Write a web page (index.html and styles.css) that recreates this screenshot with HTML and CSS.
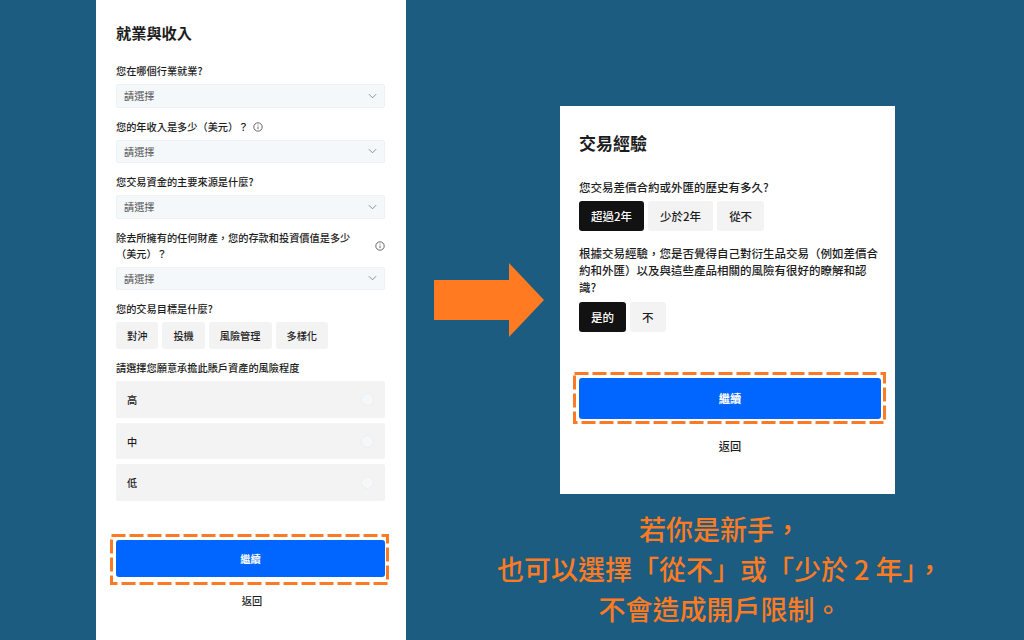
FILE: index.html
```html
<!DOCTYPE html>
<html lang="zh-Hant">
<head>
<meta charset="utf-8">
<title>開戶問卷</title>
<link rel="stylesheet" href="styles.css">
</head>
<body>
<main class="page">
  <section class="panel">
    <h2 class="panel-title">就業與收入</h2>
    <div class="field">
      <div class="label">您在哪個行業就業?</div>
      <div class="select"><span>請選擇</span><svg class="chev" viewBox="0 0 10 6"><path d="M1 1l4 4 4-4"/></svg></div>
    </div>
    <div class="field">
      <div class="label label-inline">您的年收入是多少（美元）？<svg class="info" viewBox="0 0 10 10"><circle cx="5" cy="5" r="4.2"/><path d="M5 4.5v2.7M5 2.6v.9"/></svg></div>
      <div class="select"><span>請選擇</span><svg class="chev" viewBox="0 0 10 6"><path d="M1 1l4 4 4-4"/></svg></div>
    </div>
    <div class="field">
      <div class="label">您交易資金的主要來源是什麼?</div>
      <div class="select"><span>請選擇</span><svg class="chev" viewBox="0 0 10 6"><path d="M1 1l4 4 4-4"/></svg></div>
    </div>
    <div class="field">
      <div class="label label-split"><span class="label-wrap">除去所擁有的任何財產，您的存款和投資價值是多少（美元）？</span><svg class="info" viewBox="0 0 10 10"><circle cx="5" cy="5" r="4.2"/><path d="M5 4.5v2.7M5 2.6v.9"/></svg></div>
      <div class="select"><span>請選擇</span><svg class="chev" viewBox="0 0 10 6"><path d="M1 1l4 4 4-4"/></svg></div>
    </div>
    <div class="field">
      <div class="label">您的交易目標是什麼?</div>
      <div class="chips">
        <span class="chip">對沖</span><span class="chip">投機</span><span class="chip">風險管理</span><span class="chip">多樣化</span>
      </div>
    </div>
    <div class="field">
      <div class="label">請選擇您願意承擔此賬戶資產的風險程度</div>
      <div class="rows">
        <div class="row"><span>高</span><i class="radio"></i></div>
        <div class="row"><span>中</span><i class="radio"></i></div>
        <div class="row"><span>低</span><i class="radio"></i></div>
      </div>
    </div>
    <div class="dash dash-left">
      <svg class="dash-line" viewBox="0 0 279 51"><rect x="1.5" y="1.5" width="276" height="48"/></svg>
      <div class="cta">繼續</div>
    </div>
    <div class="back">返回</div>
  </section>

  <section class="stage">
    <div class="stage-top">
      <svg class="arrow" viewBox="0 0 110 74"><polygon points="0,17 75,17 75,0 110,37 75,74 75,57 0,57"/></svg>
      <div class="card">
        <h2 class="card-title">交易經驗</h2>
        <div class="card-label">您交易差價合約或外匯的歷史有多久?</div>
        <div class="card-chips">
          <span class="card-chip active">超過2年</span><span class="card-chip">少於2年</span><span class="card-chip">從不</span>
        </div>
        <div class="card-label card-label-long">根據交易經驗，您是否覺得自己對衍生品交易（例如差價合約和外匯）以及與這些產品相關的風險有很好的瞭解和認識?</div>
        <div class="card-chips card-chips-short">
          <span class="card-chip active">是的</span><span class="card-chip">不</span>
        </div>
        <div class="dash dash-right">
          <svg class="dash-line" viewBox="0 0 313 52"><rect x="1.5" y="1.5" width="310" height="49"/></svg>
          <div class="cta cta-large">繼續</div>
        </div>
        <div class="back back-large">返回</div>
      </div>
    </div>
    <p class="caption">若你是新手，<br>也可以選擇「從不」或「少於 2 年」，<br>不會造成開戶限制。</p>
  </section>
</main>
</body>
</html>
```

FILE: styles.css
```css
* { box-sizing: border-box; }
html, body { margin: 0; height: 100%; }
body {
  background: #1b5c80;
  color: #1c1c1c;
  font-family: "Noto Sans CJK TC", "Noto Sans", sans-serif;
  overflow: hidden;
}
.page { display: flex; height: 640px; padding-left: 96px; }

.panel {
  width: 310px;
  height: 640px;
  flex: none;
  background: #fff;
  padding: 20px 21px 0 20px;
}
.panel-title { margin: 0 0 19px; font-size: 15.2px; line-height: 24px; font-weight: 700; }
.field { margin-bottom: 11px; }
.label { font-size: 10.2px; line-height: 16px; font-weight: 500; margin-bottom: 5px; }
.label-inline { display: flex; align-items: center; }
.label-split { display: flex; align-items: center; justify-content: space-between; }
.label-wrap { width: 240px; }
.info { width: 10px; height: 10px; margin-left: 5px; flex: none; fill: none; stroke: #444; stroke-width: 0.8; }
.select {
  height: 23.5px;
  display: flex;
  align-items: center;
  justify-content: space-between;
  padding: 0 7px;
  background: #f4f8fb;
  border: 1px solid #eef2f5;
  border-radius: 2px;
  font-size: 10.2px;
  color: #555;
}
.chev { width: 9px; height: 6px; fill: none; stroke: #777; stroke-width: 0.9; }
.chips { display: flex; gap: 4px; }
.chip {
  height: 27px;
  display: flex;
  align-items: center;
  padding: 0 11px;
  background: #f3f3f3;
  border-radius: 3px;
  font-size: 10.2px;
  font-weight: 500;
}
.rows { display: flex; flex-direction: column; gap: 5px; }
.row {
  height: 36.7px;
  display: flex;
  align-items: center;
  justify-content: space-between;
  padding: 0 11px;
  background: #f3f3f3;
  border-radius: 2px;
  font-size: 10.2px;
  font-weight: 500;
}
.radio { width: 13px; height: 13px; border-radius: 50%; background: #f4f8fb; border: 1px solid #eceeef; }

.dash { position: relative; }
.dash-left { width: 279px; height: 51px; margin: 33px 0 0 -6px; padding: 6px 4px 8px 6px; }
.dash-right { width: 313px; height: 52px; margin: 40px 0 0 -6px; padding: 6px 5px 5px 6px; }
.dash-line { position: absolute; inset: 0; width: 100%; height: 100%; }
.dash-line rect { fill: none; stroke: #fb7a26; stroke-width: 3; stroke-dasharray: 14 4; }
.cta {
  height: 100%;
  display: flex;
  align-items: center;
  justify-content: center;
  background: #0066ff;
  border-radius: 3px;
  color: #fff;
  font-size: 10.2px;
  font-weight: 700;
}
.cta-large { font-size: 11.2px; }
.back { margin-top: 8px; text-align: center; font-size: 10.2px; line-height: 16px; font-weight: 500; margin-left: 3px; }
.back-large { margin: 13px 0 0; font-size: 11.2px; line-height: 18px; text-align: center; }

.stage { flex: 1; padding: 106px 0 0 10px; }
.stage-top { display: flex; align-items: center; gap: 16px; padding-left: 18px; }
.arrow { width: 110px; height: 74px; flex: none; fill: #ff7a21; }
.card {
  width: 335px;
  height: 388px;
  flex: none;
  background: #fff;
  padding: 25px 14px 0 19px;
}
.card-title { margin: 0 0 24px; font-size: 17px; line-height: 24px; font-weight: 700; }
.card-label { font-size: 11.5px; line-height: 16px; font-weight: 500; margin-bottom: 6px; }
.card-label-long { line-height: 17px; margin: 13.5px 0 6.5px; width: 300px; }
.card-chips { display: flex; gap: 4px; height: 30px; }
.card-chips-short { height: 29.5px; }
.card-chip {
  display: flex;
  align-items: center;
  padding: 0 12px;
  background: #f3f3f3;
  border-radius: 3px;
  font-size: 11.5px;
  font-weight: 500;
}
.card-chip.active { background: #121212; color: #fff; }

.caption {
  margin: 15px 0 0;
  text-align: center;
  color: #ff7a21;
  font-size: 27px;
  line-height: 40px;
  font-weight: 500;
}
```
